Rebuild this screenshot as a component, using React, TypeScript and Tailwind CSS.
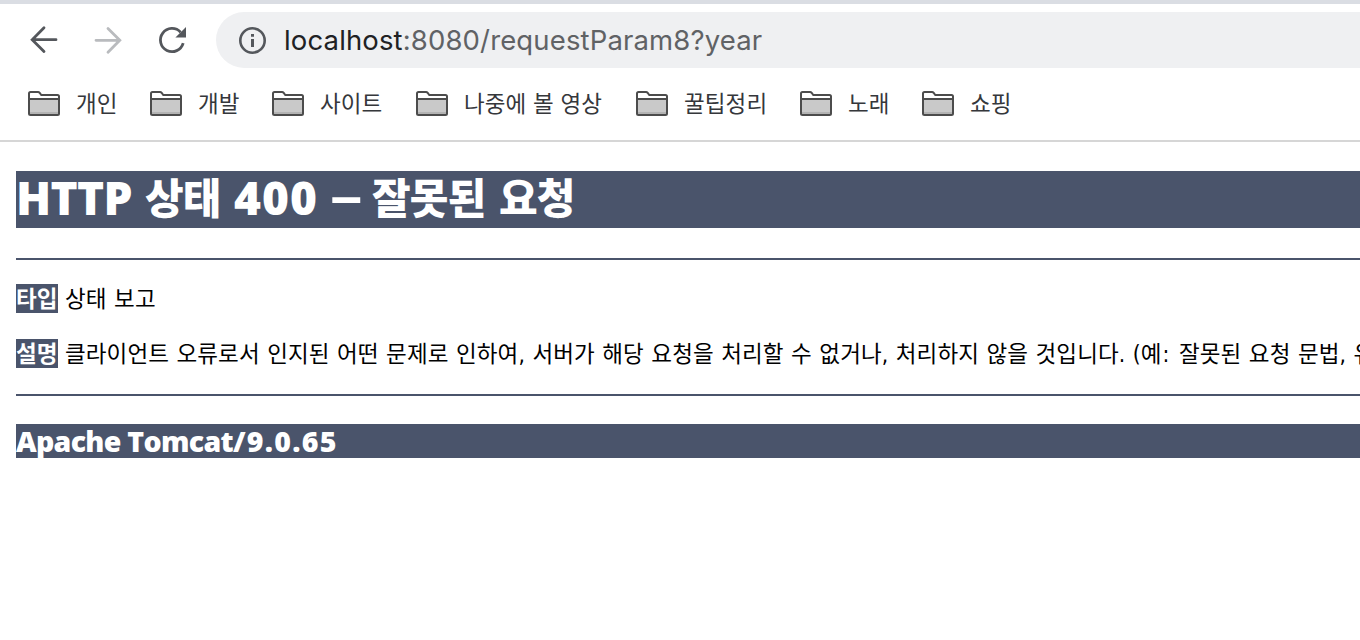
import type { ReactNode } from "react";
import clsx from "clsx";

type Bookmark = { label: string; width: string };

const bookmarks: Bookmark[] = [
  { label: "개인", width: "w-[42px]" },
  { label: "개발", width: "w-[42px]" },
  { label: "사이트", width: "w-[64px]" },
  { label: "나중에 볼 영상", width: "w-[140px]" },
  { label: "꿀팁정리", width: "w-[84px]" },
  { label: "노래", width: "w-[42px]" },
  { label: "쇼핑", width: "w-[42px]" },
];

function BackIcon({ className }: { className: string }) {
  return (
    <svg className={clsx("h-8 w-8 shrink-0", className)} viewBox="0 0 32 32" fill="none" stroke="currentColor" strokeWidth="2.8">
      <path d="M28 15.7H4.5M16 3.8L4.2 15.7L16 27.6" strokeLinecap="round" />
    </svg>
  );
}

function ReloadIcon() {
  return (
    <svg className="h-8 w-8 shrink-0 text-[#54575c]" viewBox="0 0 32 32" fill="none">
      <path d="M27.2 19.2A11.6 11.6 0 1 1 24.6 8.2" stroke="currentColor" strokeWidth="2.8" />
      <path d="M30 3V13.6H19.4Z" fill="currentColor" />
    </svg>
  );
}

function InfoIcon() {
  return (
    <svg className="h-7 w-7 shrink-0 text-[#54575c]" viewBox="0 0 28 28" fill="none">
      <circle cx="14.5" cy="14.5" r="12.2" stroke="currentColor" strokeWidth="2.6" />
      <path d="M13 8h3v2.8h-3zM13 13h3V21h-3z" fill="currentColor" />
    </svg>
  );
}

function FolderIcon() {
  return (
    <svg className="h-[25px] w-8 shrink-0" viewBox="0 0 32 25">
      <path d="M1 9H31V23.5H1Z" fill="#c9c9c9" />
      <path d="M1 21H31V23.5H1Z" fill="#b3b3b3" />
      <path
        d="M1 8H31M1 22.5V2.5Q1 1 2.5 1H10Q11 1 11.7 1.9L13.3 4H29.5Q31 4 31 5.5V22.5Q31 24 29.5 24H2.5Q1 24 1 22.5Z"
        fill="none"
        stroke="#4c4c4c"
        strokeWidth="2"
      />
    </svg>
  );
}

function Toolbar() {
  return (
    <div className="flex h-16 items-center pt-2 pl-7">
      <BackIcon className="text-[#54575c]" />
      <BackIcon className="ml-8 rotate-180 text-[#b9bbbe]" />
      <div className="ml-8">
        <ReloadIcon />
      </div>
      <div className="ml-7 flex h-14 flex-1 items-center rounded-l-full bg-[#eff0f2] pl-[22px]">
        <InfoIcon />
        <span className="ml-[18px] pt-0.5 font-[Inter,sans-serif] text-[27.5px] tracking-[0.14px] whitespace-nowrap text-[#202124]">
          localhost<span className="text-[#606265]">:8080/requestParam8?year</span>
        </span>
      </div>
    </div>
  );
}

function BookmarksBar() {
  return (
    <div className="flex h-[74px] items-center gap-8 border-b-2 border-[#d6d6d6] pl-7">
      {bookmarks.map((b) => (
        <div key={b.label} className="flex h-[30px] items-start gap-4 pt-0.5">
          <FolderIcon />
          <span
            className={clsx(
              "-mt-1 font-['Noto_Sans_CJK_KR',sans-serif] text-[22.5px] leading-[30px] tracking-[0.1px] whitespace-nowrap text-[#35373b] [word-spacing:1.5px]",
              b.width,
            )}
          >
            {b.label}
          </span>
        </div>
      ))}
    </div>
  );
}

function StatusLine({ name, children }: { name: string; children: ReactNode }) {
  return (
    <p className="flex h-[29px] items-center gap-[7px] text-[22.5px] leading-[29px] tracking-[0.1px] whitespace-nowrap">
      <b className="h-[29px] w-[42px] shrink-0 bg-[#4a546b] leading-[31px] font-bold text-white">{name}</b>
      <span className="pt-0.5 [word-spacing:0.95px]">{children}</span>
    </p>
  );
}

export default function App() {
  return (
    <div className="h-[640px] w-full overflow-hidden border-t-4 border-[#dadde3] bg-white text-black">
      <Toolbar />
      <BookmarksBar />
      <main className="pt-[29px] pl-4 font-['DejaVu_Sans_Condensed','DejaVu_Sans','Noto_Sans_CJK_KR',sans-serif] font-stretch-condensed">
        <h1 className="flex h-[57px] bg-[#4a546b] font-['Open_Sans','Noto_Sans_CJK_KR',sans-serif] text-[42px] leading-[53px] font-extrabold font-stretch-normal whitespace-nowrap text-white">
          <span className="w-[129px] text-[46px] tracking-[-0.7px]">HTTP</span>
          <span className="w-[89px] tracking-[-1px]">상태</span>
          <span className="w-[96px] text-[46px] tracking-[1px]">400</span>
          <span className="w-[42px] origin-left scale-x-155 leading-[49px]">–</span>
          <span className="w-[127px] tracking-[-0.8px]">잘못된</span>
          <span className="tracking-[-0.8px]">요청</span>
        </h1>
        <hr className="mt-[30px] border-t-2 border-[#4a546b]" />
        <div className="mt-6 flex flex-col gap-[26px]">
          <StatusLine name="타입">상태 보고</StatusLine>
          <StatusLine name="설명">
            클라이언트 오류로서 인지된 어떤 문제로 인하여, 서버가 해당 요청을 처리할 수 없거나, 처리하지 않을 것입니다. (예
            <span className="mr-0.5 ml-px">:</span> 잘못된 요청 문법, 유효하지 않은 요청 메시지 framing)
          </StatusLine>
        </div>
        <hr className="mt-[26px] border-t-2 border-[#4a546b]" />
        <h3 className="mt-7 h-[34px] bg-[#4a546b] font-['Open_Sans',sans-serif] text-[28.5px] leading-[34px] font-extrabold tracking-[-0.7px] font-stretch-normal text-white">
          Apache Tomcat/<span className="ml-0.5 tracking-[1.3px]">9.0.65</span>
        </h3>
      </main>
    </div>
  );
}
